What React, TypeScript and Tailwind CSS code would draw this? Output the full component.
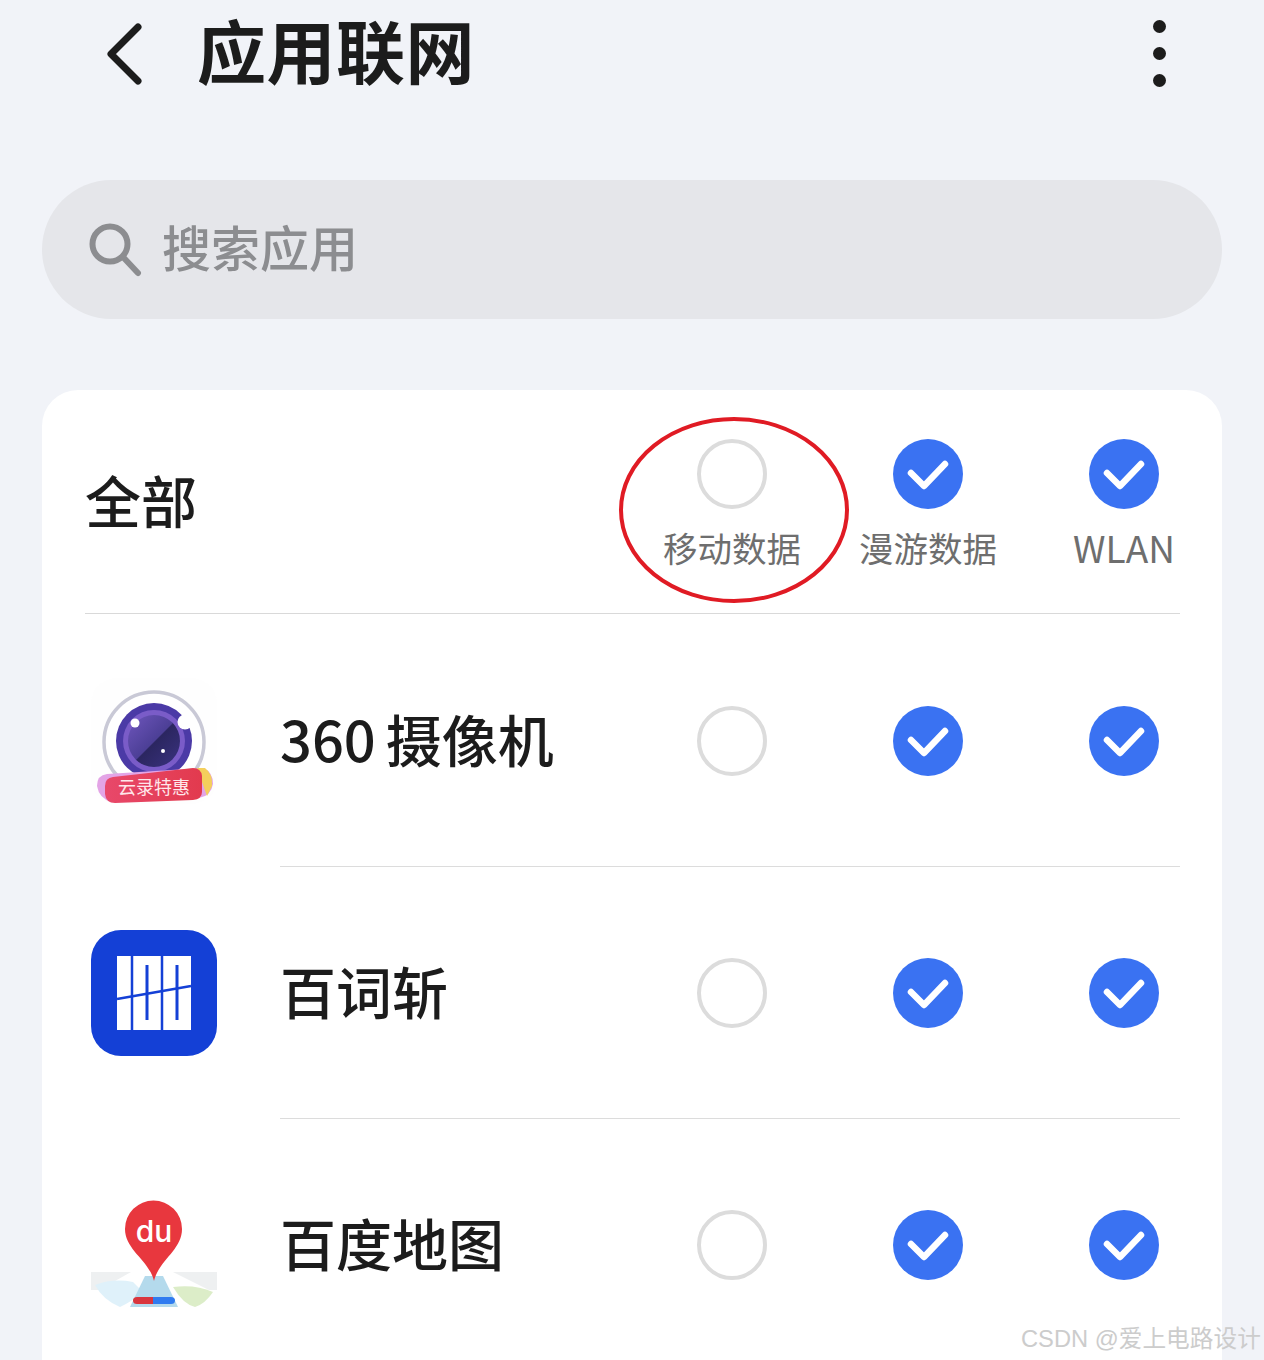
const cjk = "font-['Noto_Sans_CJK_SC','Noto_Sans',sans-serif]";

const Radio = ({ on }: { on: boolean }) =>
  on ? (
    <svg width="70" height="70" viewBox="0 0 70 70" fill="none">
      <circle cx="35" cy="35" r="35" fill="#3a72f2" />
      <path d="M18 34 L31 47 L52 25" stroke="white" strokeWidth="6.5" strokeLinecap="round" strokeLinejoin="round" />
    </svg>
  ) : (
    <div className="w-[70px] h-[70px] rounded-full border-[4px] border-[#dcdcdc]" />
  );

const Cell = ({ on }: { on: boolean }) => (
  <div className="w-[196px] flex justify-center">
    <Radio on={on} />
  </div>
);

const CameraIcon = () => (
  <svg width="126" height="126" viewBox="0 0 126 126">
    <defs>
      <linearGradient id="lens" x1="0" y1="0" x2="1" y2="1">
        <stop offset="0%" stopColor="#6f56bd" />
        <stop offset="50%" stopColor="#4c3f96" />
        <stop offset="52%" stopColor="#2b2660" />
        <stop offset="100%" stopColor="#3a3380" />
      </linearGradient>
      <linearGradient id="ribbon" x1="0" y1="0" x2="1" y2="0">
        <stop offset="0%" stopColor="#e8486a" />
        <stop offset="100%" stopColor="#e23a4e" />
      </linearGradient>
    </defs>
    <rect x="0" y="0" width="126" height="126" rx="26" fill="#fefefe" />
    <circle cx="63" cy="64" r="50" fill="white" stroke="#c9c9d6" strokeWidth="3.5" />
    <circle cx="63" cy="63" r="38" fill="#4b3aa6" />
    <circle cx="63" cy="63" r="31" fill="#7a5cc8" />
    <circle cx="63" cy="63" r="26" fill="url(#lens)" />
    <circle cx="44" cy="45" r="4.5" fill="white" />
    <circle cx="94" cy="44" r="7.5" fill="white" />
    <circle cx="72" cy="73" r="2" fill="white" />
    <path d="M6 108 Q6 97 16 96 L112 90 Q122 94 122 106 Q120 118 108 120 L20 124 Q8 120 6 108Z" fill="#e3a4e6" />
    <path d="M106 90 L114 90 Q122 96 121 108 L116 118 Z" fill="#f4cf5c" />
    <path d="M14 108 Q14 100 22 99 L102 90 Q110 90 111 98 L111 114 Q111 121 102 122 L24 125 Q15 125 14 116Z" fill="url(#ribbon)" />
    <text x="63" y="116" textAnchor="middle" fontSize="18" fill="#ffe6ea" fontFamily="'Noto Sans CJK SC',sans-serif">云录特惠</text>
  </svg>
);

const WordsIcon = () => (
  <svg width="126" height="126" viewBox="0 0 126 126">
    <rect width="126" height="126" rx="30" fill="#1440d6" />
    <rect x="26" y="26" width="74" height="74" fill="white" />
    <path d="M41 26V100M71 26V100" stroke="#1440d6" strokeWidth="2.5" />
    <path d="M56 35V90M86 35V90" stroke="#1440d6" strokeWidth="3" />
    <path d="M26 69 L100 56" stroke="#1440d6" strokeWidth="2.5" />
  </svg>
);

const MapIcon = () => (
  <svg width="126" height="126" viewBox="0 0 126 126">
    <path d="M0 90 H40 L8 108 H0Z M82 90 H126 V108 H118Z" fill="#eef0f1" />
    <path d="M4 103 Q22 96 42 100 L52 110 Q40 120 29 125 Q12 118 4 103Z" fill="#dff1fa" />
    <path d="M82 105 Q104 102 122 110 Q114 122 104 125 Q92 122 82 105Z" fill="#dcedc8" />
    <path d="M54 94 H72 L87 125 H39Z" fill="#b4daec" />
    <path d="M63 99 C58 78 34 68 34 47 A28.5 28.5 0 0 1 91 47 C91 68 68 78 63 99Z" fill="#e8373e" />
    <text x="63" y="60" textAnchor="middle" fontSize="30" fontWeight="500" fill="white" fontFamily="'Inter',sans-serif">du</text>
    <path d="M62 115 H46 Q42 115 42 118.5 Q42 122 46 122 H62Z" fill="#d9363e" />
    <path d="M62 115 H80 Q84 115 84 118.5 Q84 122 80 122 H62Z" fill="#2f7bf0" />
  </svg>
);

const rows = [
  { name: <><span className="mr-[10px]">360</span>摄像机</>, key: '360', icon: <CameraIcon /> },
  { name: '百词斩', key: 'bcz', icon: <WordsIcon /> },
  { name: '百度地图', key: 'map', icon: <MapIcon /> },
];

export default function App() {
  return (
    <div className={`relative h-[1360px] overflow-hidden bg-[#f1f3f8] ${cjk}`}>
      <header className="h-[107px] flex items-center justify-between pl-[104px] pr-[98px]">
        <div className="flex items-center gap-[53px]">
          <svg width="40" height="66" viewBox="0 0 40 66" fill="none" stroke="#1c1c1c" strokeWidth="7" strokeLinecap="round" strokeLinejoin="round">
            <path d="M34 6 L7 33 L34 60" />
          </svg>
          <h1 className="text-[69px] leading-none pb-[8px] font-bold text-[#1c1c1c] tracking-[0.5px]">应用联网</h1>
        </div>
        <div className="flex flex-col gap-[14px]">
          <span className="w-[13px] h-[13px] rounded-full bg-[#1c1c1c]" />
          <span className="w-[13px] h-[13px] rounded-full bg-[#1c1c1c]" />
          <span className="w-[13px] h-[13px] rounded-full bg-[#1c1c1c]" />
        </div>
      </header>

      <div className="mx-[42px] mt-[73px] h-[139px] rounded-full bg-[#e5e6ea] flex items-center pl-[46px] gap-[20px]">
        <svg width="54" height="54" viewBox="0 0 54 54" fill="none" stroke="#8c8d90" strokeWidth="6" strokeLinecap="round">
          <circle cx="22" cy="21" r="17.5" />
          <path d="M35 34 L50 50" />
        </svg>
        <span className="text-[49px] leading-none pb-[8px] font-medium text-[#8c8d90]">搜索应用</span>
      </div>

      <div className="mx-[42px] mt-[71px] rounded-t-[36px] bg-white">
        <div className="ml-[43px] mr-[42px] h-[224px] mb-px border-b border-[#d9d9d9] flex">
          <div className="flex-1 flex items-center text-[56px] font-medium text-[#1c1c1c] pb-[5px]">全部</div>
          <div className="flex -mr-[42px] pt-[49px]">
            {[
              { label: '移动数据', on: false },
              { label: '漫游数据', on: true },
              { label: 'WLAN', on: true },
            ].map((c) => (
              <div key={c.label} className="w-[196px] flex flex-col items-center gap-[12px]">
                <Radio on={c.on} />
                <span className={`${c.label === 'WLAN' ? 'text-[37px]' : 'text-[34.5px]'} leading-[52px] text-[#6e6e6e]`}>{c.label}</span>
              </div>
            ))}
          </div>
        </div>

        {rows.map((r, i) => (
          <div key={r.key} className="flex h-[252px] pl-[49px]">
            <div className="w-[126px] shrink-0 flex items-center justify-center">{r.icon}</div>
            <div className={`ml-[63px] mr-[42px] flex-1 flex items-center ${i < 2 ? 'border-b border-[#dcdcdc]' : ''}`}>
              <div className="flex-1 text-[56px] font-medium text-[#1c1c1c] pb-[6px]">{r.name}</div>
              <div className="flex -mr-[42px]">
                <Cell on={false} />
                <Cell on={true} />
                <Cell on={true} />
              </div>
            </div>
          </div>
        ))}
      </div>

      {/* red annotation drawn over the screenshot */}
      <svg className="absolute left-[612px] top-[410px]" width="244" height="200" viewBox="0 0 244 200" fill="none">
        <ellipse cx="122" cy="100" rx="113" ry="91" stroke="#e01b24" strokeWidth="4" />
      </svg>

      <div className="absolute left-[1021px] top-[1323px] text-[23.7px] leading-[32px] text-[#cccccc] whitespace-nowrap font-['Liberation_Sans','Noto_Sans_CJK_SC',sans-serif]">
        CSDN @爱上电路设计
      </div>
    </div>
  );
}
